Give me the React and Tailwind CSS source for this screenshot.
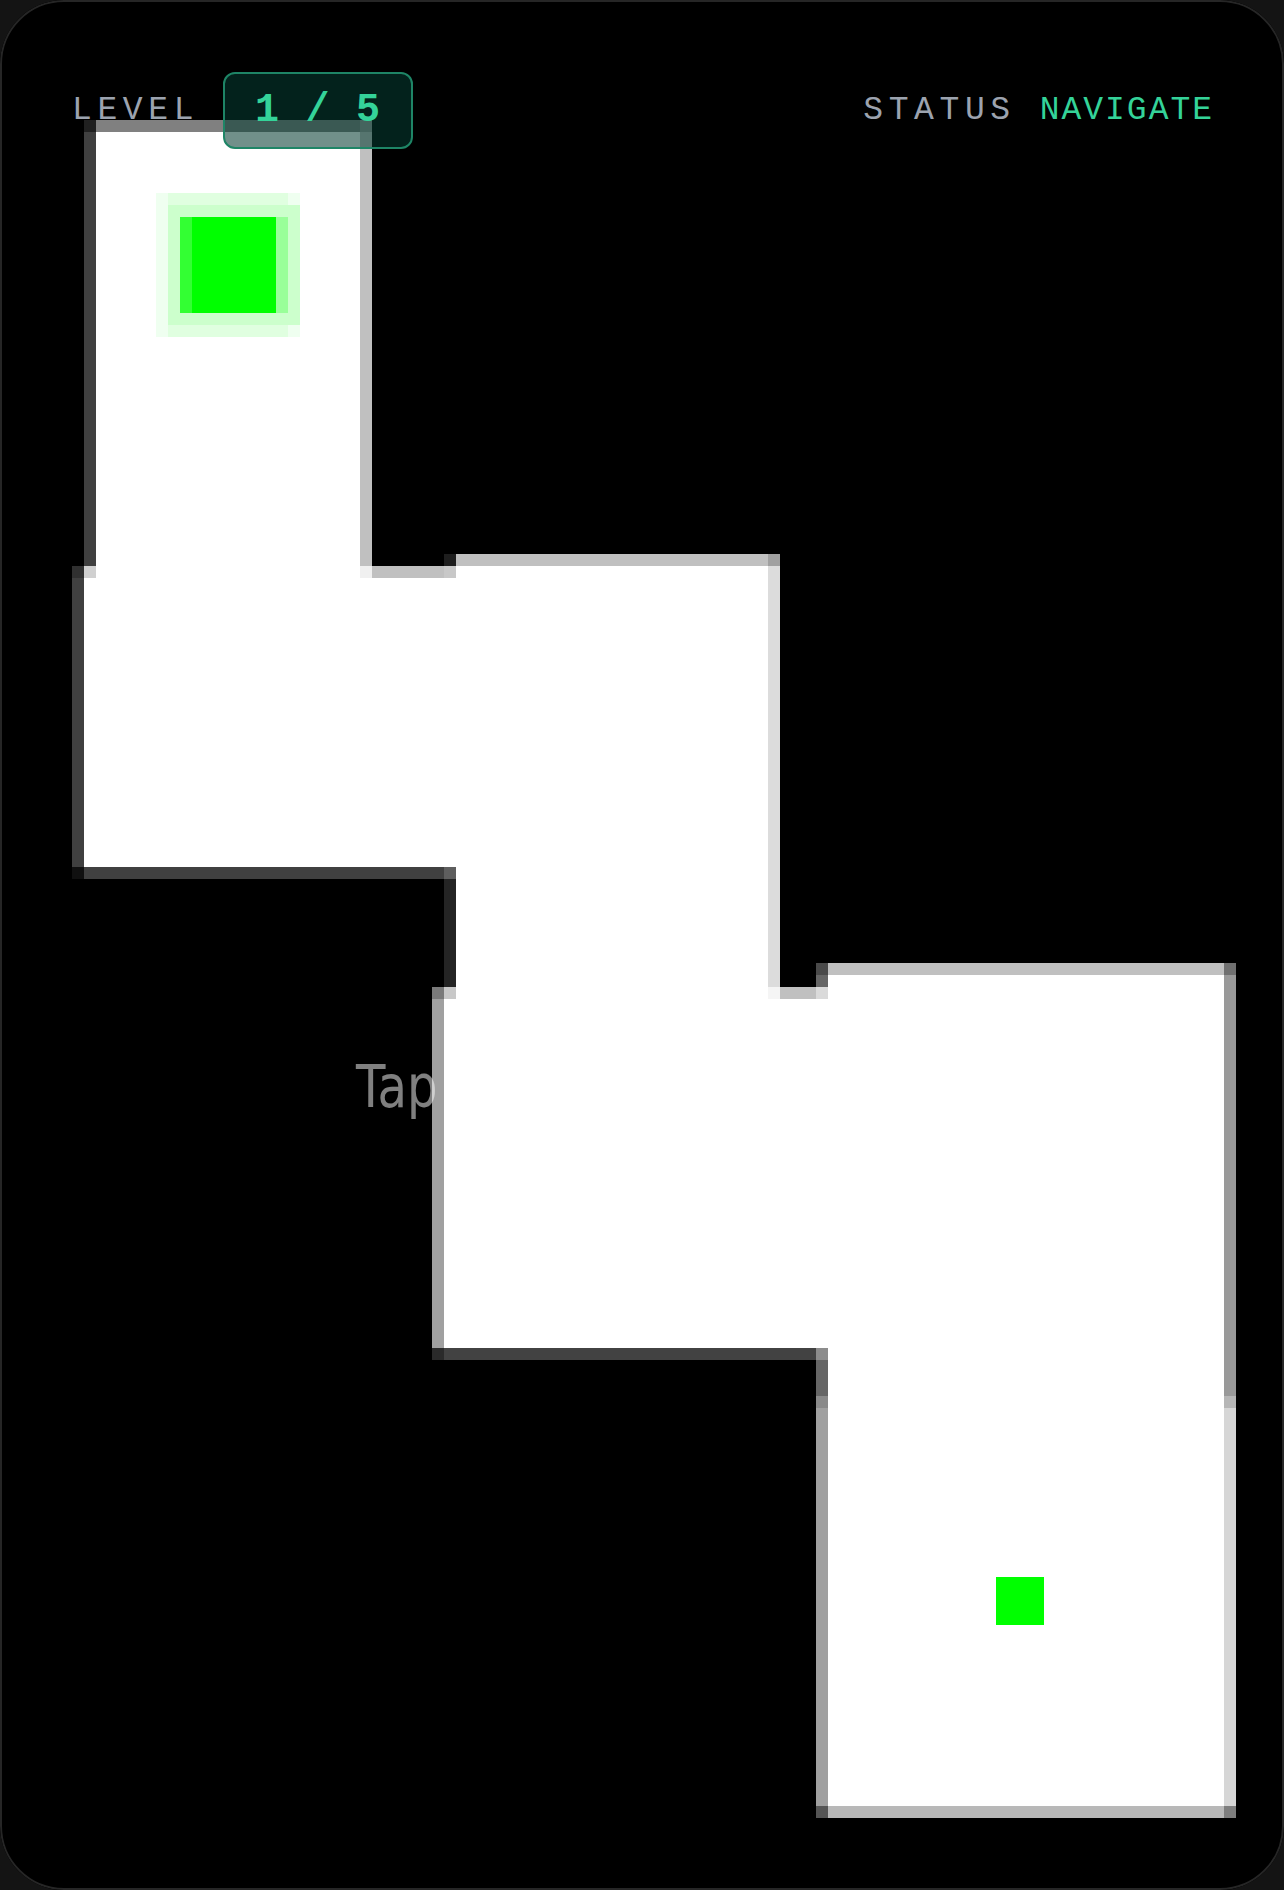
import React from 'react';

// maze floor + wall tiles, in board pixels (12px grid)
const FLOORS = [
	[96, 132, 264, 446],
	[84, 578, 372, 289],
	[456, 566, 312, 433],
	[444, 999, 384, 349],
	[828, 975, 396, 831],
];

const WALLS = [
	// room a
	[84, 120, 12, 12, '#202020'],
	[96, 120, 264, 12, '#808080'],
	[360, 120, 12, 12, '#9a9a9a'],
	[84, 132, 12, 434, '#404040'],
	[360, 132, 12, 434, '#c0c0c0'],
	// a -> b seam
	[72, 566, 12, 12, '#303030'],
	[84, 566, 12, 12, '#d0d0d0'],
	[360, 566, 12, 12, '#f0f0f0'],
	[372, 566, 72, 12, '#c0c0c0'],
	[444, 566, 12, 12, '#c8c8c8'],
	[444, 554, 12, 12, '#1e1e1e'],
	[456, 554, 312, 12, '#c0c0c0'],
	[768, 554, 12, 12, '#a0a0a0'],
	// room b
	[72, 578, 12, 289, '#404040'],
	[72, 867, 12, 12, '#101010'],
	[84, 867, 360, 12, '#404040'],
	[444, 867, 12, 12, '#5e5e5e'],
	// room c
	[444, 879, 12, 108, '#242424'],
	[768, 566, 12, 421, '#dcdcdc'],
	// c -> d seam
	[432, 987, 12, 12, '#7a7a7a'],
	[444, 987, 12, 12, '#c8c8c8'],
	[768, 987, 12, 12, '#f5f5f5'],
	[780, 987, 36, 12, '#c0c0c0'],
	[816, 987, 12, 12, '#dadada'],
	// room d
	[432, 999, 12, 349, '#a0a0a0'],
	[432, 1348, 12, 12, '#2a2a2a'],
	[444, 1348, 372, 12, '#424242'],
	[816, 1348, 12, 12, '#8c8c8c'],
	// room e
	[816, 963, 12, 12, '#4a4a4a'],
	[828, 963, 396, 12, '#c0c0c0'],
	[1224, 963, 12, 12, '#707070'],
	[816, 975, 12, 12, '#666666'],
	[1224, 975, 12, 421, '#999999'],
	[1224, 1396, 12, 12, '#b6b6b6'],
	[1224, 1408, 12, 398, '#d6d6d6'],
	[816, 1360, 12, 36, '#666666'],
	[816, 1396, 12, 12, '#8a8a8a'],
	[816, 1408, 12, 398, '#a0a0a0'],
	[816, 1806, 12, 12, '#555555'],
	[828, 1806, 396, 12, '#b8b8b8'],
	[1224, 1806, 12, 12, '#7e7e7e'],
];

const PLAYER = [
	[156, 193, 144, 144, '#effff0'],
	[168, 193, 120, 144, '#e0ffe0'],
	[168, 205, 132, 120, '#ccffcc'],
	[180, 217, 12, 96, '#33ff33'],
	[192, 217, 84, 96, '#00ff00'],
	[276, 217, 12, 96, '#99ff99'],
];

function Board() {
	return (
		<svg
			className="absolute left-0 top-0"
			width="1284"
			height="1890"
			viewBox="0 0 1284 1890"
			shapeRendering="crispEdges"
		>
			{FLOORS.map(([x, y, w, h], i) => (
				<rect key={'f' + i} x={x} y={y} width={w} height={h} fill="#ffffff" />
			))}
			{/* openings between rooms */}
			<rect x="96" y="566" width="264" height="12" fill="#ffffff" />
			<rect x="444" y="578" width="12" height="289" fill="#ffffff" />
			<rect x="456" y="987" width="312" height="12" fill="#ffffff" />
			{WALLS.map(([x, y, w, h, c], i) => (
				<rect key={'w' + i} x={x} y={y} width={w} height={h} fill={c} />
			))}
			{PLAYER.map(([x, y, w, h, c], i) => (
				<rect key={'p' + i} x={x} y={y} width={w} height={h} fill={c} />
			))}
			{/* goal */}
			<rect x="996" y="1577" width="48" height="48" fill="#00ff00" />
		</svg>
	);
}

export default function App() {
	return (
		<div className="h-[1890px] w-[1284px] bg-[#141414]">
			<div className="relative h-full w-full overflow-hidden rounded-[64px] bg-black">
				<Board />

				<div
					className="absolute left-[356px] top-[1058px] origin-left scale-x-[0.83] whitespace-nowrap text-[58px] leading-none text-white/50"
					style={{ fontFamily: '"DejaVu Sans", sans-serif' }}
				>
					Tap to start
				</div>

				<div
					className="absolute left-[72px] right-[70px] top-[72px] flex h-[77px] items-center justify-between"
					style={{ fontFamily: '"Liberation Mono", monospace' }}
				>
					<div className="flex items-center gap-[24px]">
						<span className="text-[33px] tracking-[0.17em] text-[#9ca3af]">LEVEL</span>
						<div className="flex h-[77px] w-[190px] items-center justify-center rounded-[12px] border-2 border-[#1e8566] bg-[#053c31]/57">
							<span className="text-[40px] font-bold tracking-[0.03em] text-[#34d399]">1 / 5</span>
						</div>
					</div>
					<div className="flex items-center gap-6 text-[33px]">
						<span className="tracking-[0.17em] text-[#9ca3af]">STATUS</span>
						<span className="tracking-[0.06em] text-[#34d399]">NAVIGATE</span>
					</div>
				</div>

				<div className="pointer-events-none absolute inset-0 rounded-[64px] border-2 border-[#262626]" />
			</div>
		</div>
	);
}
